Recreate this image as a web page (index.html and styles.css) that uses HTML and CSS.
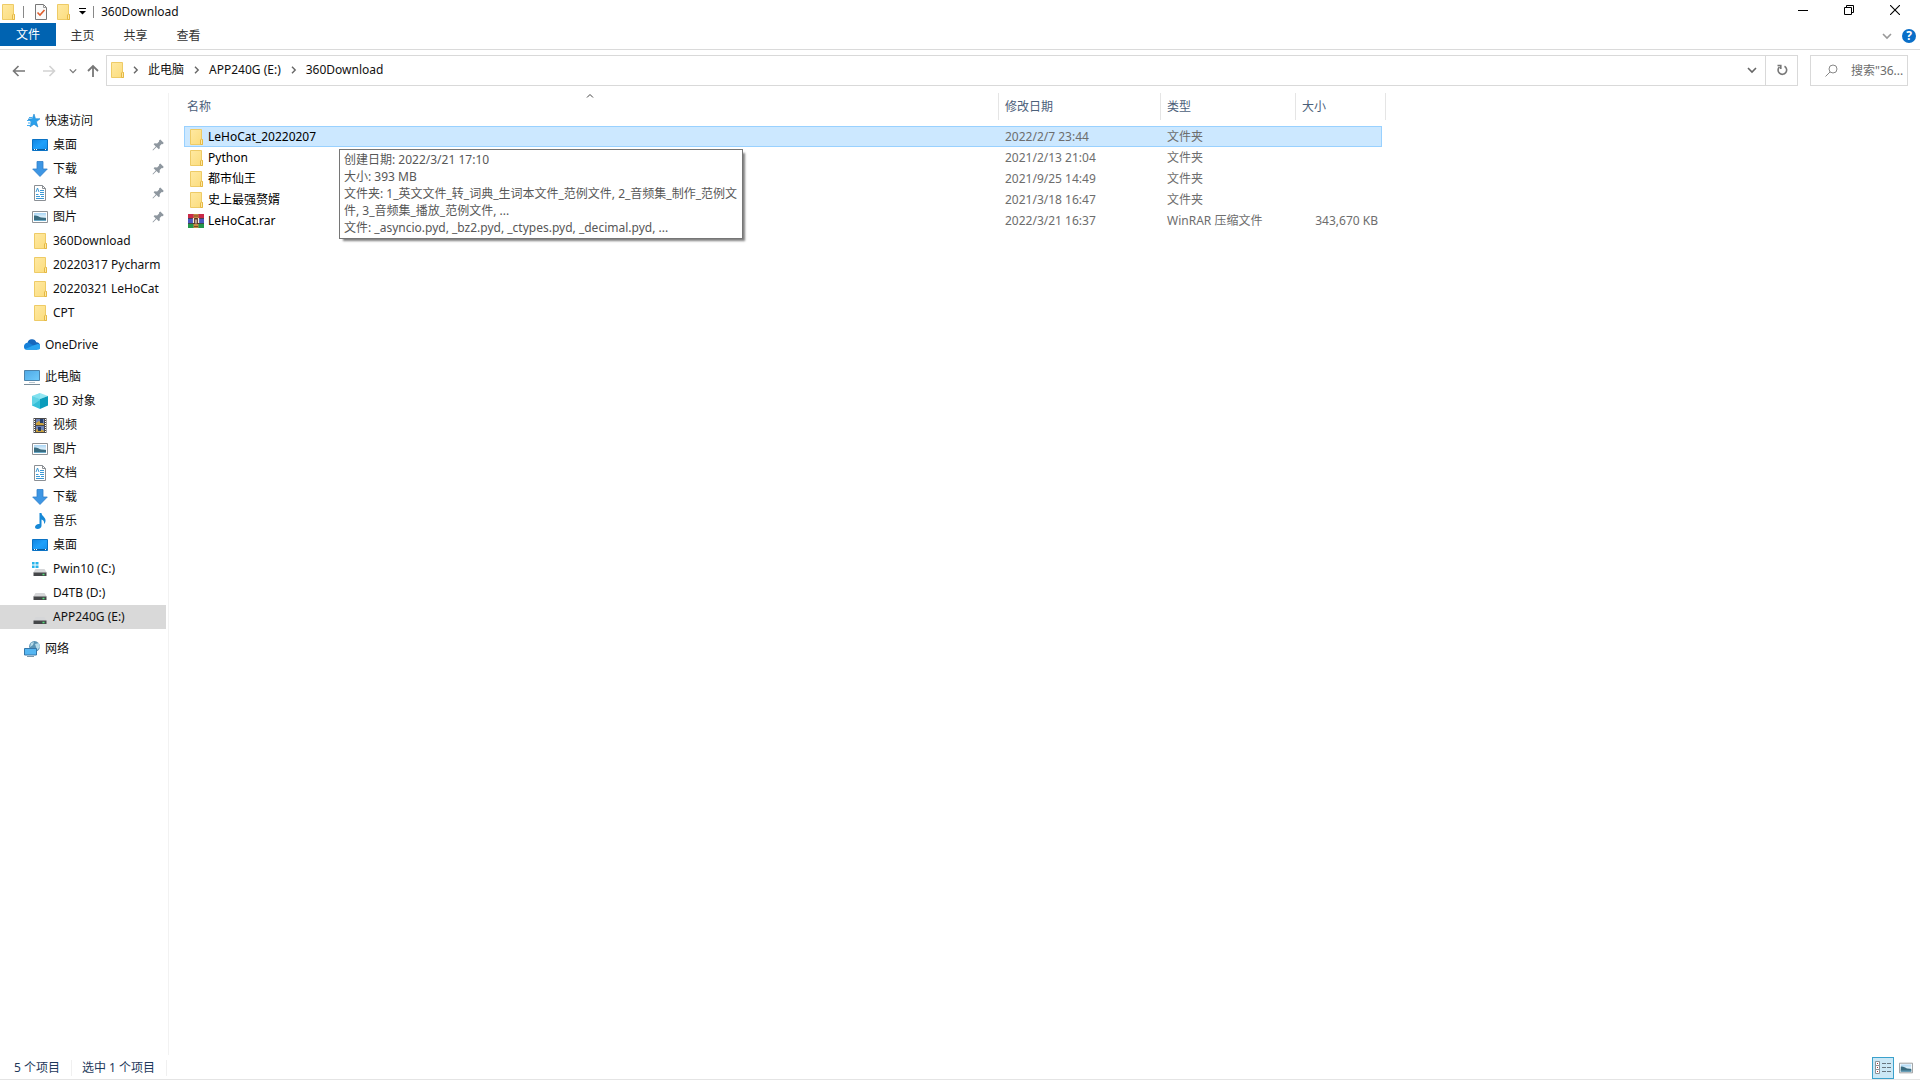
FILE: index.html
```html
<!DOCTYPE html>
<html lang="zh-CN">
<head>
<meta charset="utf-8">
<title>360Download</title>
<link rel="stylesheet" href="styles.css">
</head>
<body>
<svg class="sprite" aria-hidden="true">
  <linearGradient id="g-folder" x1="0" y1="0" x2="1" y2="1"><stop offset="0" stop-color="#ffe9a2"/><stop offset="1" stop-color="#fbdc7c"/></linearGradient>
  <linearGradient id="g-screen" x1="0" y1="0" x2="1" y2="1"><stop offset="0" stop-color="#1284e0"/><stop offset=".5" stop-color="#1fa0fb"/><stop offset="1" stop-color="#1690ec"/></linearGradient>
  <linearGradient id="g-pc" x1="0" y1="0" x2="1" y2="1"><stop offset="0" stop-color="#4fa9e6"/><stop offset="1" stop-color="#6fcbfb"/></linearGradient>
  <linearGradient id="g-photo" x1="0" y1="0" x2="0" y2="1"><stop offset="0" stop-color="#a8d5f5"/><stop offset=".5" stop-color="#dff0fa"/><stop offset="1" stop-color="#2f6f8c"/></linearGradient>
  <symbol id="folder" viewBox="0 0 16 16"><path d="M2.500.5h11v9.500l1 .5v5h-12z" fill="url(#g-folder)" stroke="#eecb66"/><path d="M12.500 15.500V11l1-1 1 .5v5z" fill="#ffe9a2" stroke="#e5b844"/></symbol>
  <symbol id="star" viewBox="0 0 16 16"><path d="M10 1l1.500 4.700 4.500.1-3.600 3 1.500 5.200L10 11.200 6 14l1.400-5L4 6l4.300-.3z" fill="#2aa0ec" stroke="#1c86d2" stroke-width=".6"/><path d="M5 4.500h3M3 7.500h3M4 10h3M3 12.500h3" stroke="#45adf0"/></symbol>
  <symbol id="desktop" viewBox="0 0 16 16"><path d="M.5 2.500h15v11H.5z" fill="url(#g-screen)" stroke="#0b72c4"/><path d="M1 12.500h14" stroke="#0a5a9c"/><path d="M2 12.500h1m1 0h1m8 0h1" stroke="#fff"/></symbol>
  <symbol id="download" viewBox="0 0 16 16"><path d="M5 .5h6V8h4.300L8 15.500.7 8H5z" fill="#3d96e4" stroke="#2e7ec9" stroke-width=".8"/></symbol>
  <symbol id="document" viewBox="0 0 16 16"><path d="M2.500.5h8l3 3v12h-11z" fill="#fff" stroke="#8b8f94"/><path d="M10.500.5v3h3" fill="none" stroke="#8b8f94"/><path d="M4 7l1.500-4L7 7M8 5.500h4M4 9.500h2.500M8 7.500h4M8 9.500h4M4 11.500h4M9 11.500h3M4 13.500h8" fill="none" stroke="#3c99d4"/></symbol>
  <symbol id="picture" viewBox="0 0 16 16"><path d="M.5 2.500h15v11H.5z" fill="#fff" stroke="#8f9296"/><path d="M2 4h12v8H2z" fill="url(#g-photo)"/><path d="M2 6.500c3-.5 5 1 7 2l5 .5V12H2z" fill="#3a6c80"/><path d="M2 11h12v1H2z" fill="#6cabc9"/></symbol>
  <symbol id="cloud" viewBox="0 0 16 16"><path d="M3.500 6A4.600 4.600 0 0 1 12.300 5.200 3.500 3.500 0 0 1 16 9L13 12H3.400z" fill="#1668bd"/><path d="M0 9.500A3.500 3.500 0 0 1 3.500 5.800c1.300 0 2 .4 3 1L14 11l-1 1.800H3A3.100 3.100 0 0 1 0 9.500z" fill="#1680d8"/><path d="M1.200 12L9.200 8.400 13.700 7A2.900 2.900 0 0 1 13.500 12.800H3a3 3 0 0 1-1.800-.8z" fill="#2aa5f0"/></symbol>
  <symbol id="pc" viewBox="0 0 16 16"><path d="M.5 1.500h15v10H.5z" fill="url(#g-pc)" stroke="#4d83aa"/><path d="M5 13.500h6" stroke="#b8c5cf"/><path d="M0 15.500h16" stroke="#7a8d9a"/></symbol>
  <symbol id="cube" viewBox="0 0 16 16"><path d="M0 3l8-3 8 3-8 3z" fill="#94e7f3"/><path d="M0 3l8 3v10l-8-3.500z" fill="#35bfd8"/><path d="M8 6l8-3v9.500L8 16z" fill="#0b9cbb"/><path d="M3 2l5-2v7l-8 5.500V3z" fill="#79ddec" opacity=".65"/></symbol>
  <symbol id="video" viewBox="0 0 16 16"><path d="M1.500 1h13v15h-13z" fill="#4b4949"/><path d="M4 2h8v6H4zM4 9h8v6H4z" fill="#6d83b8"/><path d="M4 6l3-2 5 3v1H4zM4 13l3-2 5 3v1H4z" fill="#cba23c"/><path d="M8 2h3v4H8zM6 10h3v4H6z" fill="#263d68"/><path d="M2.500 2v14M13.500 2v14" stroke="#fff" stroke-dasharray="1 1"/></symbol>
  <symbol id="music" viewBox="0 0 16 16"><path d="M7.500 0h2c0 3 4 4 4 7.500 0 1.500-.5 2.500-1.500 3.500.5-3-1-4-2.500-4.500v6.300C9.500 14.500 8 16 5.500 16 4 16 3 15.200 3 14c0-2 2.500-3.500 4.500-3z" fill="#1688d6"/></symbol>
  <symbol id="drive" viewBox="0 0 16 16"><path d="M3.500 7h9L15 11H1z" fill="#d5d6d8"/><path d="M1.500 10.500h13V14h-13z" fill="#454749"/><path d="M10.500 12.500h2" stroke="#53e178" stroke-width="1.500"/></symbol>
  <symbol id="windrive" viewBox="0 0 16 16"><use href="#drive" y="1"/><path d="M0 1h2.600v2.500H0zM3.500 1h3v2.500h-3zM0 4.500h2.600V7H0zM3.500 4.500h3V7h-3z" fill="#27b4ea"/></symbol>
  <symbol id="network" viewBox="0 0 16 16"><circle cx="10.500" cy="5.500" r="5.400" fill="#5a94b4"/><path d="M7 2l3-1-1 3-3 2zM11 3l4-1 1 4-3 3z" fill="#b7dbe9"/><path d="M.5 7.500h12v6.500H.5z" fill="#55b6f2" stroke="#3676a8"/><path d="M3 15.500h7" stroke="#7b98ab"/></symbol>
  <symbol id="pin" viewBox="0 0 12 12"><path d="M7 1.500L8.300.5l3.500 3.500-1.300 1.200-.8-.2-2 2 .1 2.300-1 1-2.300-2.300L1 11.500l-.5-.5 3.300-3.500L1.600 5.300l1-1 2.500.1 2-2z" fill="#8e979f"/></symbol>
  <symbol id="rar" viewBox="0 0 16 16"><path d="M0 1h16v4.300H0z" fill="#c92a48"/><path d="M0 5.300h16v5H0z" fill="#4a58c0"/><path d="M0 10.300h16V15H0z" fill="#23974a"/><path d="M0 5.500h16M0 10.500h16" stroke="#38323f" stroke-width=".8"/><path d="M5.500 1h5v14h-5z" fill="#c78b43"/><path d="M5 5h6v6H5z" fill="#5b3628"/><path d="M5.500 5v5M8 6.500v4M10.500 5v5" stroke="#f7eddd" stroke-width="1.200"/><path d="M6 3h4M6 13.500h4" stroke="#7a4a28"/></symbol>
  <symbol id="chev-r" viewBox="0 0 8 8"><path d="M2 .8L5.200 4 2 7.200" fill="none" stroke="#666" stroke-width="1.400"/></symbol>
  <symbol id="chev-d" viewBox="0 0 10 10"><path d="M1 3l4 4 4-4" fill="none" stroke="currentColor" stroke-width="1.600"/></symbol>
</svg>

<header class="titlebar">
  <svg class="icon"><use href="#folder"/></svg>
  <i class="bar bar-first"></i>
  <button class="quick" aria-label="属性"><svg class="icon" viewBox="0 0 16 16"><path d="M2.500.5h8l3 3v12h-11z" fill="#fafafa" stroke="#777"/><path d="M10.500.5v3h3" fill="none" stroke="#999"/><path d="M4.500 8.500L7 11l4.500-5" fill="none" stroke="#df5d2c" stroke-width="1.600"/></svg></button>
  <button class="quick" aria-label="新建文件夹"><svg class="icon"><use href="#folder"/></svg></button>
  <button class="quick more" aria-label="自定义快速访问工具栏"><svg width="7" height="7" viewBox="0 0 7 7"><path d="M0 .5h7" stroke="#000"/><path d="M0 3h7L3.500 6.500z"/></svg></button>
  <i class="bar"></i>
  <h1>360Download</h1>
  <div class="window-buttons">
    <button aria-label="最小化"><svg width="10" height="10"><path d="M0 5.500h10" stroke="#000"/></svg></button>
    <button aria-label="还原"><svg width="10" height="10" fill="none" stroke="#000"><path d="M.5 2.500h7v7h-7zM2.500 2V.5h7v7H8"/></svg></button>
    <button aria-label="关闭"><svg width="10" height="10"><path d="M0 0l10 10M10 0L0 10" stroke="#000" stroke-width="1.100"/></svg></button>
  </div>
</header>

<nav class="ribbon">
  <button class="tab file">文件</button>
  <button class="tab">主页</button>
  <button class="tab">共享</button>
  <button class="tab">查看</button>
  <div class="ribbon-end">
    <button class="expand" aria-label="展开功能区"><svg width="10" height="10"><use href="#chev-d"/></svg></button>
    <button class="help" aria-label="帮助">?</button>
  </div>
</nav>

<div class="navbar">
  <div class="history">
    <button aria-label="后退"><svg width="14" height="14" fill="none" stroke="#777" stroke-width="1.600"><path d="M13 7H2M6.500 2L1.500 7l5 5"/></svg></button>
    <button class="forward" aria-label="前进"><svg width="14" height="14" fill="none" stroke="#d2d2d2" stroke-width="1.600"><path d="M1 7h11M7.500 2l5 5-5 5"/></svg></button>
    <button class="recent" aria-label="最近浏览的位置"><svg width="8" height="8"><use href="#chev-d"/></svg></button>
    <button class="up" aria-label="上移"><svg width="12" height="14" fill="none" stroke="#777" stroke-width="1.800"><path d="M6 13V2M1 7l5-5 5 5"/></svg></button>
  </div>
  <div class="address">
    <svg class="icon"><use href="#folder"/></svg>
    <svg class="sep first"><use href="#chev-r"/></svg>
    <a href="#">此电脑</a>
    <svg class="sep"><use href="#chev-r"/></svg>
    <a href="#">APP240G (E:)</a>
    <svg class="sep"><use href="#chev-r"/></svg>
    <a href="#">360Download</a>
    <button class="drop" aria-label="以前的位置"><svg width="10" height="10"><use href="#chev-d"/></svg></button>
    <button class="refresh" aria-label="刷新"><svg width="12" height="12" fill="none" stroke="#777" stroke-width="1.600"><path d="M8.500 2.300A4.300 4.300 0 1 1 3.500 2.800"/><path d="M1.500 1.500h3.300V5"/></svg></button>
  </div>
  <label class="search">
    <svg width="13" height="13" fill="none" stroke="#888"><circle cx="8" cy="5" r="4"/><path d="M5 8l-4.500 4.500"/></svg>
    <input type="text" aria-label="搜索" placeholder="搜索&quot;36...">
  </label>
</div>

<div class="body">
  <nav class="tree">
    <ul>
      <li class="top"><a href="#"><svg class="icon"><use href="#star"/></svg>快速访问</a></li>
      <li><a href="#"><svg class="icon"><use href="#desktop"/></svg>桌面<svg class="pin"><use href="#pin"/></svg></a></li>
      <li><a href="#"><svg class="icon"><use href="#download"/></svg>下载<svg class="pin"><use href="#pin"/></svg></a></li>
      <li><a href="#"><svg class="icon"><use href="#document"/></svg>文档<svg class="pin"><use href="#pin"/></svg></a></li>
      <li><a href="#"><svg class="icon"><use href="#picture"/></svg>图片<svg class="pin"><use href="#pin"/></svg></a></li>
      <li><a href="#"><svg class="icon"><use href="#folder"/></svg>360Download</a></li>
      <li><a href="#"><svg class="icon"><use href="#folder"/></svg>20220317 Pycharm</a></li>
      <li><a href="#"><svg class="icon"><use href="#folder"/></svg>20220321 LeHoCat</a></li>
      <li><a href="#"><svg class="icon"><use href="#folder"/></svg>CPT</a></li>
    </ul>
    <ul>
      <li class="top"><a href="#"><svg class="icon"><use href="#cloud"/></svg>OneDrive</a></li>
    </ul>
    <ul>
      <li class="top"><a href="#"><svg class="icon"><use href="#pc"/></svg>此电脑</a></li>
      <li><a href="#"><svg class="icon"><use href="#cube"/></svg>3D 对象</a></li>
      <li><a href="#"><svg class="icon"><use href="#video"/></svg>视频</a></li>
      <li><a href="#"><svg class="icon"><use href="#picture"/></svg>图片</a></li>
      <li><a href="#"><svg class="icon"><use href="#document"/></svg>文档</a></li>
      <li><a href="#"><svg class="icon"><use href="#download"/></svg>下载</a></li>
      <li><a href="#"><svg class="icon"><use href="#music"/></svg>音乐</a></li>
      <li><a href="#"><svg class="icon"><use href="#desktop"/></svg>桌面</a></li>
      <li><a href="#"><svg class="icon"><use href="#windrive"/></svg>Pwin10 (C:)</a></li>
      <li><a href="#"><svg class="icon"><use href="#drive" y="1"/></svg>D4TB (D:)</a></li>
      <li class="current"><a href="#"><svg class="icon"><use href="#drive" y="1"/></svg>APP240G (E:)</a></li>
    </ul>
    <ul>
      <li class="top"><a href="#"><svg class="icon"><use href="#network"/></svg>网络</a></li>
    </ul>
  </nav>

  <main class="files">
    <table>
      <colgroup><col class="c-name"><col class="c-date"><col class="c-type"><col class="c-size"></colgroup>
      <thead>
        <tr>
          <th class="sorted"><button>名称</button><svg class="sort" width="8" height="6"><path d="M1 4.500l3-3 3 3" fill="none" stroke="#444"/></svg></th>
          <th><button>修改日期</button></th>
          <th><button>类型</button></th>
          <th><button>大小</button></th>
        </tr>
      </thead>
      <tbody>
        <tr class="selected"><td class="name"><svg class="icon"><use href="#folder"/></svg>LeHoCat_20220207</td><td>2022/2/7 23:44</td><td>文件夹</td><td class="size"></td></tr>
        <tr><td class="name"><svg class="icon"><use href="#folder"/></svg>Python</td><td>2021/2/13 21:04</td><td>文件夹</td><td class="size"></td></tr>
        <tr><td class="name"><svg class="icon"><use href="#folder"/></svg>都市仙王</td><td>2021/9/25 14:49</td><td>文件夹</td><td class="size"></td></tr>
        <tr><td class="name"><svg class="icon"><use href="#folder"/></svg>史上最强赘婿</td><td>2021/3/18 16:47</td><td>文件夹</td><td class="size"></td></tr>
        <tr><td class="name"><svg class="icon"><use href="#rar"/></svg>LeHoCat.rar</td><td>2022/3/21 16:37</td><td>WinRAR 压缩文件</td><td class="size">343,670 KB</td></tr>
      </tbody>
    </table>
    <div class="tooltip" role="tooltip">创建日期: 2022/3/21 17:10<br>大小: 393 MB<br>文件夹: 1_英文文件_转_词典_生词本文件_范例文件, 2_音频集_制作_范例文<br>件, 3_音频集_播放_范例文件, ...<br>文件: _asyncio.pyd, _bz2.pyd, _ctypes.pyd, _decimal.pyd, ...</div>
  </main>
</div>

<footer class="status">
  <span class="count">5 个项目</span>
  <span class="chosen">选中 1 个项目</span>
  <div class="views">
    <button class="view on" aria-label="详细信息"><svg width="18" height="16"><path d="M1.500 1.500h4v4h-4zM1.500 5.500h4v4h-4zM1.500 9.500h4v4h-4z" fill="#fff" stroke="#8a9298"/><path d="M3 3.500h1M3 7.500h1M3 11.500h1" stroke="#a33"/><path d="M8 3.500h4M13 3.500h4M8 7.500h4M13 7.500h4M8 11.500h4M13 11.500h4" stroke="#687680"/></svg></button>
    <button class="view" aria-label="大缩略图"><svg width="14" height="12" viewBox="0 2 16 12"><use href="#picture" width="16" height="16"/></svg></button>
  </div>
</footer>
</body>
</html>
```
FILE: styles.css
```css
* { box-sizing: border-box; }

body {
  margin: 0;
  min-height: 100vh;
  display: flex;
  flex-direction: column;
  background: #fff;
  color: #111;
  font: 12px/16px "Noto Sans", "Noto Sans CJK SC", sans-serif;
  border-bottom: 1px solid #e4e4e4;
}

button, input { font: inherit; color: inherit; border: 0; padding: 0; background: none; }
button { display: flex; align-items: center; justify-content: center; }
a { color: inherit; text-decoration: none; }
ul { list-style: none; margin: 0; padding: 0; }
svg { flex: none; display: block; }
.sprite { position: absolute; width: 0; height: 0; }
.icon { width: 16px; height: 16px; }

/* Title bar */
.titlebar { display: flex; align-items: center; height: 23px; }
.bar { width: 1px; height: 12px; background: #888; }
.bar-first { margin: 0 6px 0 7px; }
.quick { width: 22px; height: 22px; }
.quick.more { width: 19px; padding-right: 3px; }
.titlebar h1 { margin: 0 0 0 7px; font-size: 12px; font-weight: 400; }
.window-buttons { display: flex; align-self: flex-start; margin-left: auto; padding-right: 2px; }
.window-buttons button { width: 46px; height: 20px; }

/* Ribbon tabs */
.ribbon { display: flex; height: 27px; border-bottom: 1px solid #dadada; color: #333; }
.tab { width: 53px; height: 26px; }
.tab.file { width: 56px; height: 23px; background: #0063b1; color: #fff; }
.ribbon-end { display: flex; align-items: center; gap: 10px; margin-left: auto; padding-right: 4px; color: #999; }
.help { width: 14px; height: 14px; border-radius: 50%; background: #0a6fc8; color: #fff; font-weight: 700; }

/* Address row */
.navbar { display: flex; padding: 5px 12px 7px; }
.history { display: flex; align-items: center; gap: 16px; width: 94px; color: #777; }
.history .recent { margin-left: -3px; }
.history .up { margin-left: -6px; }
.address { flex: 1; display: flex; align-items: center; height: 31px; padding: 0 0 1px 2px; border: 1px solid #d9d9d9; }
.sep { width: 8px; height: 8px; margin: 0 8px 0 9px; }
.sep.first { margin-left: 7px; }
.drop { width: 27px; height: 28px; margin-left: auto; color: #666; }
.refresh { width: 32px; height: 29px; border-left: 1px solid #d9d9d9; }
.search { display: flex; align-items: center; gap: 13px; width: 98px; margin-left: 12px; padding-left: 14px; border: 1px solid #d9d9d9; }
.search input { width: 56px; outline: 0; }
.search input::placeholder { color: #6d6d6d; opacity: 1; }

/* Main area */
.body { flex: 1; display: flex; }
.tree { width: 169px; padding-top: 16px; border-right: 1px solid #f2f2f2; }
.tree ul + ul { margin-top: 8px; }
.tree li { height: 24px; padding-left: 32px; margin-right: 2px; }
.tree li.top { padding-left: 24px; }
.tree li.current { background: #d9d9d9; }
.tree a { display: flex; align-items: center; gap: 5px; height: 24px; white-space: nowrap; }
.pin { width: 12px; height: 12px; margin-left: auto; margin-right: 2px; }

.files { position: relative; flex: 1; padding-left: 15px; }
table { table-layout: fixed; width: 1198px; border-spacing: 0; }
.c-name { width: 815px; }
.c-date { width: 162px; }
.c-type { width: 135px; }
.c-size { width: 86px; }
th { height: 33px; padding: 0; vertical-align: top; font-weight: 400; position: relative; }
th button { width: 100%; height: 27px; padding-left: 6px; justify-content: flex-start; color: #4c607a; border-right: 1px solid #e5e5e5; }
th.sorted button { padding-left: 3px; }
th:last-child button { width: calc(100% + 4px); }
.sort { position: absolute; top: 0; left: 50%; margin-left: -6px; }
td { height: 21px; padding: 0 6px; color: #6d6d6d; white-space: nowrap; }
td.name { display: flex; align-items: center; gap: 4px; padding-left: 4px; color: #000; }
td.size { padding-right: 4px; text-align: right; }
.selected { background: #cce8ff; outline: 1px solid #99d1ff; outline-offset: -1px; }

.tooltip {
  position: absolute;
  left: 170px;
  top: 56px;
  padding: 1px 5px 2px 4px;
  border: 1px solid #767676;
  background: #fff;
  box-shadow: 3px 3px 2px -1px rgba(0, 0, 0, .5);
  color: #575757;
  line-height: 17px;
  white-space: nowrap;
}

/* Status bar */
.status { display: flex; align-items: center; height: 24px; padding: 1px 3px 0 14px; color: #1e395b; }
.count, .chosen { border-right: 1px solid #f0f0f0; padding-right: 11px; }
.chosen { padding-left: 10px; }
.views { display: flex; gap: 1px; margin-left: auto; }
.view { width: 22px; height: 22px; }
.view.on { border: 1px solid #3ba1cc; background: #cbe8f6; }
```
